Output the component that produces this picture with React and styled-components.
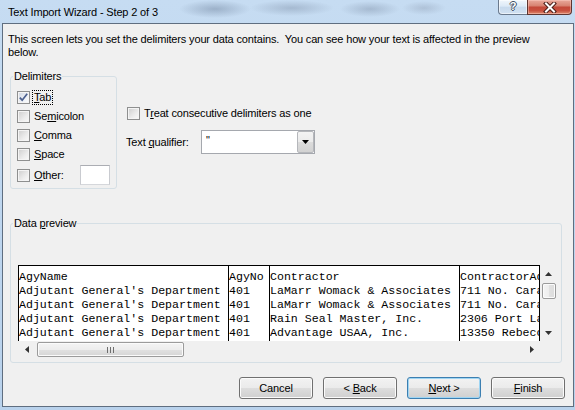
import React from "react";
import styled, { createGlobalStyle } from "styled-components";

const GlobalStyle = createGlobalStyle`
  html, body { margin: 0; padding: 0; }
  body { background: #c3d9ef; }
  *, *::before, *::after { box-sizing: border-box; }
`;

const uiFont = `"Liberation Sans", Arial, sans-serif`;
const monoFont = `"Liberation Mono", "Courier New", monospace`;

const Window = styled.div`
  width: 575px;
  height: 410px;
  display: flex;
  flex-direction: column;
  padding: 0 1px 3px 2px;
  overflow: hidden;
  font-family: ${uiFont};
  font-size: 11px;
  letter-spacing: -0.15px;
  color: #000;
  background:
    radial-gradient(ellipse 36px 9px at 215px 9px, rgba(122,142,168,.55), rgba(122,142,168,0)),
    radial-gradient(ellipse 42px 8px at 292px 8px, rgba(134,152,176,.5), rgba(134,152,176,0)),
    radial-gradient(ellipse 30px 8px at 370px 9px, rgba(134,152,176,.5), rgba(134,152,176,0)),
    radial-gradient(ellipse 22px 7px at 424px 8px, rgba(146,162,184,.45), rgba(146,162,184,0)),
    linear-gradient(180deg, #c6dcf2 0%, #bdd5ee 60%, #b9d2ec 100%);
`;

const TitleBar = styled.div`
  height: 23px;
  flex: none;
  display: flex;
  align-items: flex-start;
`;

const Title = styled.div`
  align-self: center;
  padding: 1px 0 0 6px;
  white-space: nowrap;
`;

const CaptionGroup = styled.div`
  margin-left: auto;
  margin-right: 2px;
  display: flex;
  height: 15px;
`;

const HelpButton = styled.div`
  width: 29px;
  height: 15px;
  border: 1px solid #6b7a8d;
  border-top: none;
  border-right: none;
  border-radius: 0 0 0 4px;
  background: linear-gradient(180deg, rgba(255,255,255,.75) 0%, rgba(235,242,250,.6) 45%, rgba(200,215,232,.55) 50%, rgba(215,228,242,.7) 100%);
  box-shadow: inset 0 0 0 1px rgba(255,255,255,.55);
  display: flex;
  align-items: center;
  justify-content: center;
  font: bold 11px ${uiFont};
  color: #fff;
  text-shadow: 1px 0 #3d4d60, -1px 0 #3d4d60, 0 1px #3d4d60, 0 -1px #3d4d60;
  line-height: 1;
  padding-bottom: 1px;
`;

const CloseButton = styled.div`
  width: 45px;
  height: 15px;
  border: 1px solid #5e3530;
  border-top: none;
  border-radius: 0 0 4px 0;
  background: linear-gradient(180deg, #e9a99c 0%, #d88473 40%, #c4493a 52%, #c8503e 75%, #de8a6e 100%);
  box-shadow: inset 0 0 0 1px rgba(255,210,200,.45);
  display: flex;
  align-items: center;
  justify-content: center;
`;

const Client = styled.div`
  flex: 1;
  display: flex;
  flex-direction: column;
  background: #f0f0f0;
  border: 1px solid #5f6e80;
`;

const Description = styled.div`
  margin: 9px 0 0 5px;
  line-height: 13px;
  white-space: nowrap;
`;

const MiddleRow = styled.div`
  display: flex;
  align-items: flex-start;
  gap: 9px;
  margin: 11px 0 0 7px;
`;

const GroupBox = styled.fieldset`
  margin: ${(p) => p.$mt || 0}px 0 0 ${(p) => (p.$ml === undefined ? 7 : p.$ml)}px;
  padding: 0;
  min-width: 0;
  width: ${(p) => p.$w}px;
  border: 1px solid #d5dfe5;
  border-radius: 3px;
`;

const GroupLegend = styled.legend`
  margin-left: 2px;
  padding: 0 1px;
  line-height: 13px;
`;

const DelimiterList = styled.div`
  display: flex;
  flex-direction: column;
  padding: 5px 6px 2px 6px;
`;

const CheckRow = styled.div`
  display: flex;
  align-items: center;
  height: ${(p) => p.$h || 19}px;
  padding-left: ${(p) => p.$indent || 0}px;
`;

const Box = styled.span`
  flex: none;
  width: 13px;
  height: 13px;
  border: 1px solid #8e8f8f;
  background: ${(p) =>
    p.$checked
      ? "linear-gradient(135deg, #cfd6e2 0%, #eef1f6 60%, #fbfcfd 100%)"
      : "linear-gradient(135deg, #cdcdcd 0%, #ececec 60%, #fafafa 100%)"};
  box-shadow: inset 0 0 0 1px #f4f4f4;
  display: flex;
  align-items: center;
  justify-content: center;
`;

const Label = styled.span`
  margin-left: 2px;
  padding: 0 1px;
  line-height: 13px;
  border: 1px dotted ${(p) => (p.$focus ? "#000" : "transparent")};
  white-space: nowrap;
`;

const Accel = styled.u`
  text-decoration: underline;
  text-underline-offset: 1px;
`;

const TextBox = styled.div`
  width: 30px;
  height: 20px;
  margin-left: auto;
  background: #fff;
  border: 1px solid #abadb3;
  border-color: #abadb3 #c9cbd0 #d5d7db #c9cbd0;
`;

const OptionsColumn = styled.div`
  display: flex;
  flex-direction: column;
  padding-top: 34px;
`;

const QualifierRow = styled.div`
  display: flex;
  align-items: center;
  height: 24px;
  margin-top: 7px;
`;

const QualifierLabel = styled.span`
  width: 75px;
  white-space: nowrap;
`;

const Combo = styled.div`
  width: 114px;
  height: 24px;
  display: flex;
  background: #fff;
  border: 1px solid #a5a8ae;
`;

const ComboValue = styled.span`
  flex: 1;
  padding: 3px 0 0 4px;
  font-size: 11px;
  line-height: 13px;
`;

const ComboButton = styled.span`
  width: 17px;
  border: 1px solid #b5b7bb;
  border-radius: 2px;
  background: linear-gradient(180deg, #f3f3f3 0%, #ebebeb 50%, #dcdcdc 50%, #d2d2d2 100%);
  display: flex;
  align-items: center;
  justify-content: center;
`;

const PreviewArea = styled.div`
  display: grid;
  grid-template-columns: 522px 17px;
  grid-template-rows: 76px 17px;
  padding: 35px 4px 4px 7px;
`;

const Table = styled.div`
  display: flex;
  overflow: hidden;
  background: #fff;
  border-top: 1px solid #000;
  border-left: 1px solid #000;
  font-family: ${monoFont};
  font-size: 11.6px;
  letter-spacing: 0;
  line-height: 14px;
`;

const Column = styled.div`
  flex: none;
  width: ${(p) => p.$w}px;
  border-right: 1px solid #000;
  overflow: hidden;
  padding-top: 4px;
`;

const Cell = styled.div`
  white-space: pre;
  height: 14px;
`;

const VScroll = styled.div`
  display: flex;
  flex-direction: column;
  background: #f0f0f0;
`;

const HScroll = styled.div`
  display: flex;
  align-items: stretch;
  background: #f0f0f0;
`;

const ArrowCell = styled.div`
  flex: none;
  width: 17px;
  height: 17px;
  display: flex;
  align-items: center;
  justify-content: center;
`;

const VThumb = styled.div`
  margin: 1px 1px 0 2px;
  height: 16px;
  border: 1px solid #9b9b9b;
  border-radius: 2px;
  background: linear-gradient(90deg, #f4f4f4 0%, #ededed 50%, #e1e1e1 51%, #dcdcdc 100%);
  box-shadow: inset 0 0 0 1px #fbfbfb;
`;

const HThumb = styled.div`
  margin: 1px 0 1px 2px;
  width: 147px;
  border: 1px solid #9b9b9b;
  border-radius: 2px;
  background: linear-gradient(180deg, #f4f4f4 0%, #ededed 50%, #e1e1e1 51%, #d6d6d6 100%);
  box-shadow: inset 0 0 0 1px #fbfbfb;
  display: flex;
  align-items: center;
  justify-content: center;
`;

const Spacer = styled.div`
  flex: 1;
`;

const Corner = styled.div`
  background: #f0f0f0;
`;

const Footer = styled.div`
  margin-top: auto;
  display: flex;
  justify-content: flex-end;
  gap: 10px;
  padding: 0 8px 7px 0;
`;

const Button = styled.div`
  width: 74px;
  height: 22px;
  display: flex;
  align-items: center;
  justify-content: center;
  border: 1px solid ${(p) => (p.$default ? "#3c7fb1" : "#707070")};
  border-radius: 3px;
  background: linear-gradient(180deg, #f2f2f2 0%, #ebebeb 48%, #dddddd 52%, #cfcfcf 100%);
  box-shadow: inset 0 0 0 1px ${(p) => (p.$default ? "#9fd5f3" : "#fbfbfb")};
  white-space: pre;
`;

const ButtonText = styled.span`
  white-space: pre;
`;

const CheckMark = () => (
  <svg width="11" height="11" viewBox="0 0 11 11">
    <path d="M1.8 5.6 L4.2 8.2 L9.2 1.8" fill="none" stroke="#4b5f8e" strokeWidth="1.7" />
  </svg>
);

const TriDown = ({ color = "#000" }) => (
  <svg width="7" height="4" viewBox="0 0 7 4">
    <path d="M0 0H7L3.5 4Z" fill={color} />
  </svg>
);
const TriUp = ({ color = "#000" }) => (
  <svg width="7" height="4" viewBox="0 0 7 4">
    <path d="M0 4H7L3.5 0Z" fill={color} />
  </svg>
);
const TriLeft = ({ color = "#000" }) => (
  <svg width="4" height="7" viewBox="0 0 4 7">
    <path d="M4 0V7L0 3.5Z" fill={color} />
  </svg>
);
const TriRight = ({ color = "#000" }) => (
  <svg width="4" height="7" viewBox="0 0 4 7">
    <path d="M0 0V7L4 3.5Z" fill={color} />
  </svg>
);

const Grip = () => (
  <svg width="7" height="6" viewBox="0 0 7 6">
    <rect x="0" y="0" width="1" height="6" fill="#6e6e6e" />
    <rect x="3" y="0" width="1" height="6" fill="#6e6e6e" />
    <rect x="6" y="0" width="1" height="6" fill="#6e6e6e" />
  </svg>
);

const CloseGlyph = () => (
  <svg width="14" height="11" viewBox="0 0 14 11">
    <path d="M3 1.5 L11 9.5 M11 1.5 L3 9.5" stroke="#4a1d18" strokeWidth="4" strokeLinecap="square" />
    <path d="M3 1.5 L11 9.5 M11 1.5 L3 9.5" stroke="#fff" strokeWidth="2" strokeLinecap="square" />
  </svg>
);

const Check = ({ checked, children, focus, indent, h }) => (
  <CheckRow $indent={indent} $h={h}>
    <Box $checked={checked}>{checked && <CheckMark />}</Box>
    <Label $focus={focus}>{children}</Label>
  </CheckRow>
);

const columns = [
  { w: 209, cells: ["AgyName", "Adjutant General's Department", "Adjutant General's Department", "Adjutant General's Department", "Adjutant General's Department"] },
  { w: 40, cells: ["AgyNo", "401", "401", "401", "401"] },
  { w: 189, cells: ["Contractor", "LaMarr Womack & Associates", "LaMarr Womack & Associates", "Rain Seal Master, Inc.", "Advantage USAA, Inc."] },
  { w: 79, cells: ["ContractorAddress", "711 No. Carancahua", "711 No. Carancahua", "2306 Port Lavaca", "13350 Rebecca"] },
];

export default function App() {
  return (
    <>
      <GlobalStyle />
      <Window>
        <TitleBar>
          <Title>Text Import Wizard - Step 2 of 3</Title>
          <CaptionGroup>
            <HelpButton>?</HelpButton>
            <CloseButton>
              <CloseGlyph />
            </CloseButton>
          </CaptionGroup>
        </TitleBar>
        <Client>
          <Description>
            This screen lets you set the delimiters your data contains.&nbsp; You can see how your text is affected in the preview
            <br />
            below.
          </Description>

          <MiddleRow>
            <GroupBox $w={107} $ml={0}>
              <GroupLegend>Delimiters</GroupLegend>
              <DelimiterList>
                <Check checked focus>
                  <Accel>T</Accel>ab
                </Check>
                <Check>
                  Se<Accel>m</Accel>icolon
                </Check>
                <Check>
                  <Accel>C</Accel>omma
                </Check>
                <Check>
                  <Accel>S</Accel>pace
                </Check>
                <CheckRow $h={22}>
                  <Box />
                  <Label>
                    <Accel>O</Accel>ther:
                  </Label>
                  <TextBox />
                </CheckRow>
              </DelimiterList>
            </GroupBox>

            <OptionsColumn>
              <Check indent={1}>
                T<Accel>r</Accel>eat consecutive delimiters as one
              </Check>
              <QualifierRow>
                <QualifierLabel>
                  Text <Accel>q</Accel>ualifier:
                </QualifierLabel>
                <Combo>
                  <ComboValue>"</ComboValue>
                  <ComboButton>
                    <TriDown />
                  </ComboButton>
                </Combo>
              </QualifierRow>
            </OptionsColumn>
          </MiddleRow>

          <GroupBox $w={552} $mt={28}>
            <GroupLegend>
              Data <Accel>p</Accel>review
            </GroupLegend>
            <PreviewArea>
              <Table>
                {columns.map((col, i) => (
                  <Column key={i} $w={col.w + 1}>
                    {col.cells.map((c, j) => (
                      <Cell key={j}>{c}</Cell>
                    ))}
                  </Column>
                ))}
              </Table>
              <VScroll>
                <ArrowCell>
                  <TriUp color="#333" />
                </ArrowCell>
                <VThumb />
                <Spacer />
                <ArrowCell>
                  <TriDown color="#333" />
                </ArrowCell>
              </VScroll>
              <HScroll>
                <ArrowCell>
                  <TriLeft color="#333" />
                </ArrowCell>
                <HThumb>
                  <Grip />
                </HThumb>
                <Spacer />
                <ArrowCell>
                  <TriRight color="#333" />
                </ArrowCell>
              </HScroll>
              <Corner />
            </PreviewArea>
          </GroupBox>

          <Footer>
            <Button>
              <ButtonText>Cancel</ButtonText>
            </Button>
            <Button>
              <ButtonText>
                {"< "}
                <Accel>B</Accel>ack
              </ButtonText>
            </Button>
            <Button $default>
              <ButtonText>
                <Accel>N</Accel>
                {"ext >"}
              </ButtonText>
            </Button>
            <Button>
              <ButtonText>
                <Accel>F</Accel>inish
              </ButtonText>
            </Button>
          </Footer>
        </Client>
      </Window>
    </>
  );
}
